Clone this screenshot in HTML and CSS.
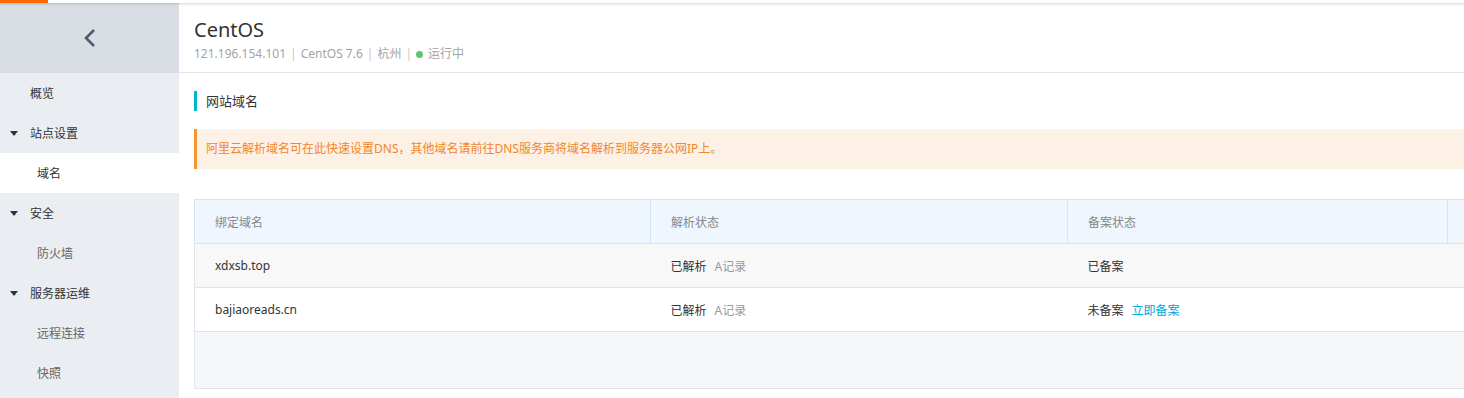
FILE: index.html
```html
<!DOCTYPE html>
<html lang="zh-CN">
<head>
    <meta charset="UTF-8">
    <meta name="viewport" content="width=device-width, initial-scale=1.0">
    <title>CentOS - 网站域名</title>
    <link rel="stylesheet" href="styles.css">
</head>
<body>
    <div class="topbar"><span class="topbar-accent"></span></div>
    <div class="layout">
        <aside class="sidebar">
            <div class="sidebar-head">
                <svg class="back" width="14" height="20" viewBox="0 0 14 20">
                    <path d="M11 2 L3 10 L11 18" fill="none" stroke="#4d5c70" stroke-width="2.6"/>
                </svg>
            </div>
            <ul class="nav">
                <li class="nav-item">概览</li>
                <li class="nav-item nav-group"><span class="caret"></span>站点设置</li>
                <li class="nav-item nav-sub active">域名</li>
                <li class="nav-item nav-group"><span class="caret"></span>安全</li>
                <li class="nav-item nav-sub">防火墙</li>
                <li class="nav-item nav-group"><span class="caret"></span>服务器运维</li>
                <li class="nav-item nav-sub">远程连接</li>
                <li class="nav-item nav-sub">快照</li>
            </ul>
        </aside>
        <main class="main">
            <header class="page-head">
                <h1>CentOS</h1>
                <div class="meta">
                    121.196.154.101<span class="sep">|</span>CentOS 7.6<span class="sep">|</span>杭州<span class="sep">|</span><span class="dot"></span>运行中
                </div>
            </header>
            <section class="content">
                <h2 class="section-title">网站域名</h2>
                <div class="alert">阿里云解析域名可在此快速设置DNS，其他域名请前往DNS服务商将域名解析到服务器公网IP上。</div>
                <table class="grid">
                    <colgroup>
                        <col class="c1"><col class="c2"><col class="c3"><col class="c4">
                    </colgroup>
                    <thead>
                        <tr>
                            <th>绑定域名</th>
                            <th>解析状态</th>
                            <th>备案状态</th>
                            <th></th>
                        </tr>
                    </thead>
                    <tbody>
                        <tr class="odd">
                            <td>xdxsb.top</td>
                            <td>已解析<span class="muted">A记录</span></td>
                            <td>已备案</td>
                            <td></td>
                        </tr>
                        <tr>
                            <td>bajiaoreads.cn</td>
                            <td>已解析<span class="muted">A记录</span></td>
                            <td>未备案<a href="#" class="link">立即备案</a></td>
                            <td></td>
                        </tr>
                        <tr class="empty">
                            <td colspan="4"></td>
                        </tr>
                    </tbody>
                </table>
            </section>
        </main>
    </div>
</body>
</html>
```

FILE: styles.css
```css
body {
    margin: 0;
    height: 398px;
    overflow: hidden;
    font-family: "Noto Sans", "Noto Sans CJK SC", sans-serif;
    font-size: 12px;
    color: #333;
    background-color: #fff;
}
.topbar {
    position: relative;
    z-index: 2;
    height: 3px;
    background-color: #fff;
    box-shadow: 0 1px 3px rgba(0, 0, 0, 0.18);
}
.topbar-accent {
    display: block;
    width: 48px;
    height: 3px;
    background-color: #ff6a00;
}
.layout {
    display: flex;
    height: 395px;
}
.sidebar {
    width: 179px;
    flex-shrink: 0;
    background-color: #eaedf1;
}
.sidebar-head {
    height: 70px;
    display: flex;
    align-items: center;
    justify-content: center;
    background-color: #d9dee4;
}
.nav {
    list-style: none;
    margin: 0;
    padding: 0;
}
.nav-item {
    height: 39px;
    line-height: 40px;
    padding-top: 1px;
    padding-left: 30px;
    color: #333;
    position: relative;
}
.nav-sub {
    padding-left: 37px;
    color: #666;
}
.nav-item.active {
    background-color: #fff;
    color: #333;
}
.caret {
    position: absolute;
    left: 10px;
    top: 18px;
    width: 0;
    height: 0;
    border-left: 4px solid transparent;
    border-right: 4px solid transparent;
    border-top: 5px solid #333;
}
.main {
    flex-grow: 1;
    overflow: hidden;
}
.page-head {
    height: 70px;
    padding: 14px 15px 0;
    box-sizing: border-box;
    border-bottom: 1px solid #e3e5e8;
}
.page-head h1 {
    margin: 0;
    font-size: 20px;
    font-weight: normal;
    line-height: 26px;
    color: #333;
}
.meta {
    margin-top: 2px;
    color: #a3a3a3;
    line-height: 18px;
}
.sep {
    margin: 0 4px;
    color: #c6c6c6;
}
.dot {
    display: inline-block;
    width: 7px;
    height: 7px;
    border-radius: 50%;
    background-color: #60c46c;
    margin: 0 5px 0 0;
    vertical-align: 0;
}
.content {
    padding: 18px 0 0 15px;
}
.section-title {
    margin: 0;
    height: 20px;
    line-height: 20px;
    padding-left: 9px;
    border-left: 3px solid #00b4d8;
    font-size: 13px;
    font-weight: normal;
    color: #333;
}
.alert {
    margin-top: 18px;
    height: 40px;
    line-height: 40px;
    padding-left: 9px;
    border-left: 3px solid #f39533;
    background-color: #fdf1e6;
    color: #f1862c;
}
.grid {
    margin-top: 30px;
    width: 1500px;
    border-collapse: collapse;
    table-layout: fixed;
    border-left: 1px solid #dde5ee;
}
.c1 { width: 456px; }
.c2 { width: 417px; }
.c3 { width: 380px; }
.grid th {
    height: 43px;
    padding: 0 20px;
    text-align: left;
    font-weight: normal;
    color: #888;
    background-color: #eff6fe;
    border: 1px solid #d4e5f8;
}
.grid td {
    height: 43px;
    padding: 0 20px;
    border-bottom: 1px solid #e3e3e3;
}
.grid tr.odd td {
    background-color: #f8f8f8;
}
.grid tr.empty td {
    height: 56px;
    background-color: #f6f7f9;
    border-bottom: 1px solid #e1e4e8;
}
.muted {
    margin-left: 8px;
    color: #999;
}
.link {
    margin-left: 8px;
    color: #00a8d6;
    text-decoration: none;
}
```
